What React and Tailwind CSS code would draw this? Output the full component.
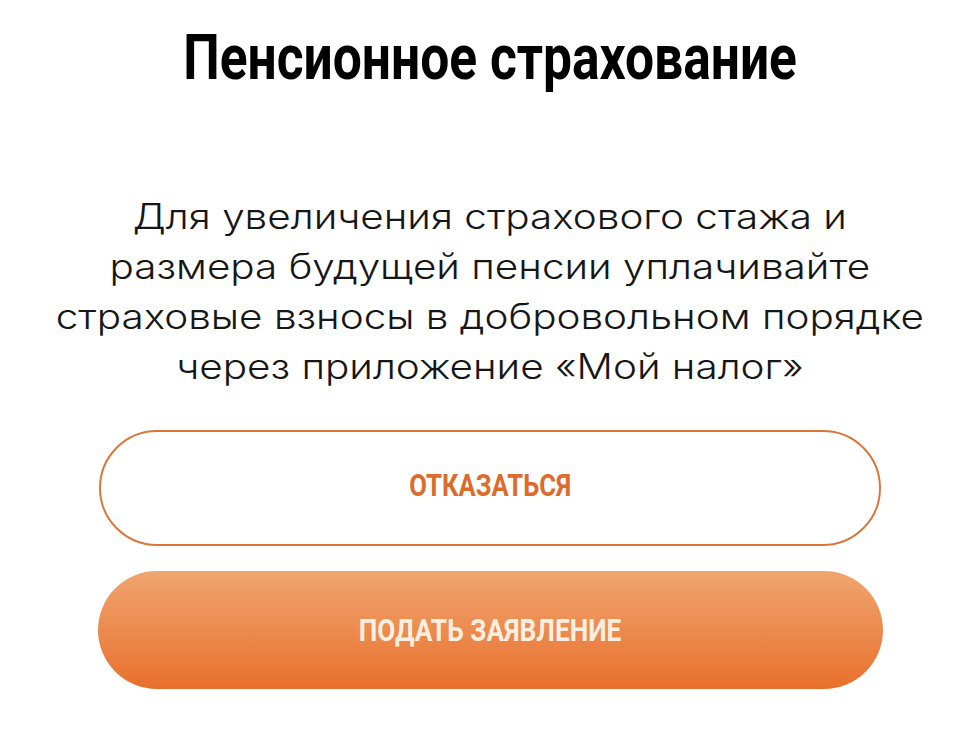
export default function App() {
  return (
    <div className="w-[980px] h-[739px] bg-white flex flex-col items-center overflow-hidden font-[family-name:Roboto,_sans-serif]">
      <h1 className="mt-[21px] text-[63px] leading-[74px] font-bold text-black whitespace-nowrap scale-x-[0.818]">
        Пенсионное страхование
      </h1>

      <p className="mt-[96px] text-center text-[35px] leading-[50px] font-light text-[#161616] whitespace-nowrap scale-x-[1.155] font-[family-name:Inter,_Roboto,_sans-serif]">
        Для увеличения страхового стажа и
        <br />
        размера будущей пенсии уплачивайте
        <br />
        страховые взносы в добровольном порядке
        <br />
        через приложение «Мой налог»
      </p>

      <button
        type="button"
        className="mt-[39px] w-[782px] h-[116px] rounded-full border-2 border-[#d9773a] bg-white flex items-center justify-center"
      >
        <span className="-mt-[6px] text-[32px] leading-none font-bold text-[#db6c2c] uppercase whitespace-nowrap scale-x-[0.8]">
          Отказаться
        </span>
      </button>

      <button
        type="button"
        className="mt-[25px] w-[785px] h-[118px] rounded-full bg-gradient-to-b from-[#efa56e] to-[#e86f29] flex items-center justify-center"
      >
        <span className="text-[32px] leading-none font-bold text-[#fcefe0] uppercase whitespace-nowrap scale-x-[0.82]">
          Подать заявление
        </span>
      </button>
    </div>
  );
}
